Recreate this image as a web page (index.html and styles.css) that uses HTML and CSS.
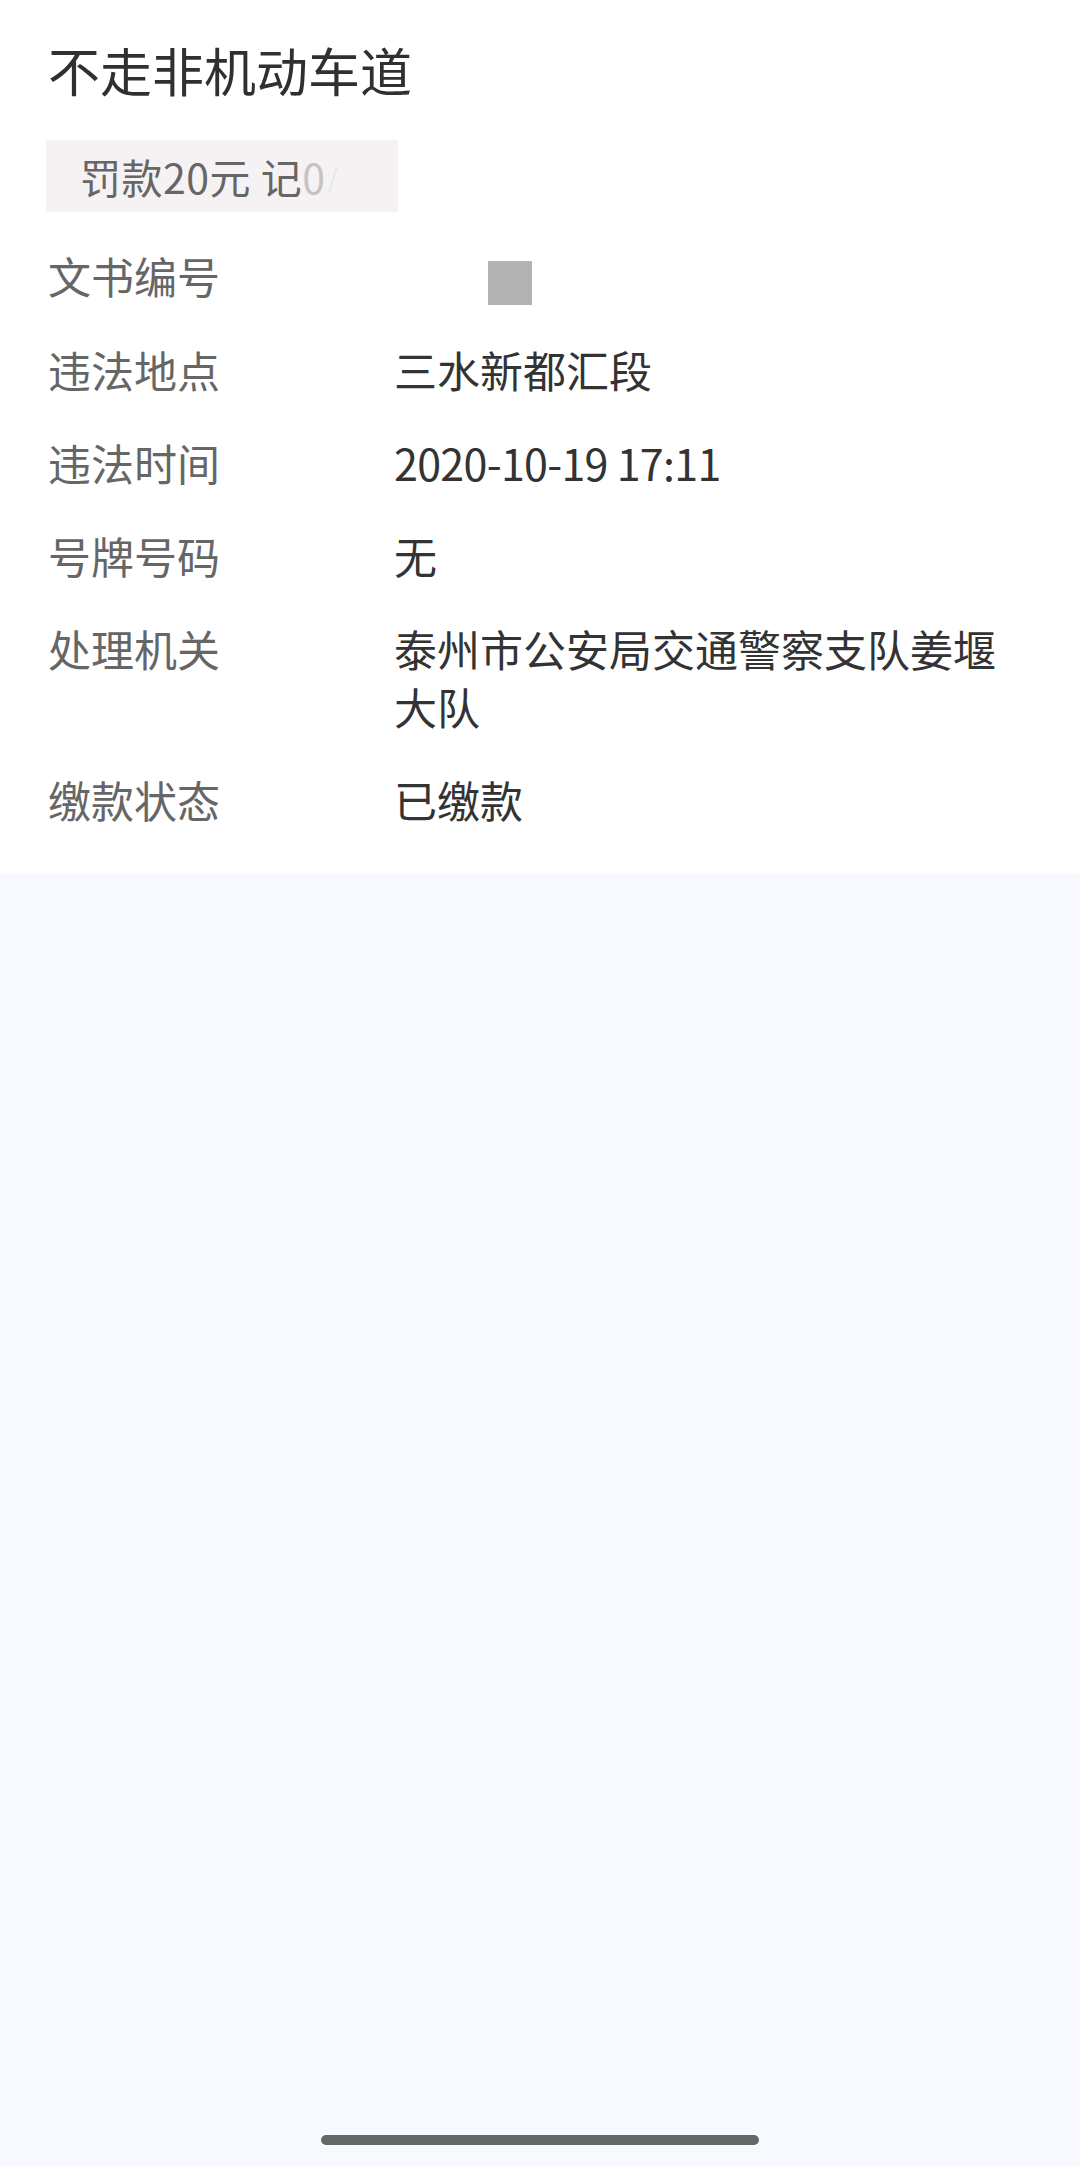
FILE: index.html
```html
<!DOCTYPE html>
<html lang="zh-CN">
<head>
    <meta charset="UTF-8">
    <meta name="viewport" content="width=device-width, initial-scale=1.0">
    <title>违法详情</title>
    <link rel="stylesheet" href="styles.css">
</head>
<body>
    <div class="detalhe">
        <h1 class="titulo">不走非机动车道</h1>

        <div class="tag">罚款20元 记<span class="tag-fade">0</span><span class="tag-risco">/</span></div>

        <div class="linhas">
            <div class="linha">
                <span class="rotulo">文书编号</span>
                <span class="valor"><span class="tarja"></span></span>
            </div>
            <div class="linha">
                <span class="rotulo">违法地点</span>
                <span class="valor">三水新都汇段</span>
            </div>
            <div class="linha">
                <span class="rotulo">违法时间</span>
                <span class="valor valor-num">2020-10-19 17:11</span>
            </div>
            <div class="linha">
                <span class="rotulo">号牌号码</span>
                <span class="valor">无</span>
            </div>
            <div class="linha">
                <span class="rotulo">处理机关</span>
                <span class="valor">泰州市公安局交通警察支队姜堰大队</span>
            </div>
            <div class="linha">
                <span class="rotulo">缴款状态</span>
                <span class="valor">已缴款</span>
            </div>
        </div>
    </div>

    <div class="rodape">
        <div class="home-bar"></div>
    </div>
</body>
</html>
```

FILE: styles.css
```css
body {
    margin: 0;
    padding: 0;
    background: #f7f9fe;
    font-family: "Noto Sans CJK SC", "Noto Sans", sans-serif;
    width: 1080px;
    height: 2166px;
    display: flex;
    flex-direction: column;
}

/* Bloco branco com os dados */
.detalhe {
    background: #fff;
    padding: 35px 48px 46px 48px;
}

.titulo {
    margin: 0;
    font-size: 52px;
    line-height: 70px;
    font-weight: 400;
    color: #303030;
}

.tag {
    display: inline-flex;
    align-items: center;
    margin-top: 35px;
    height: 72px;
    width: 352px;
    box-sizing: border-box;
    padding-left: 34px;
    margin-left: -2px;
    background: #f6f2f4;
    font-size: 41px;
    letter-spacing: 0.5px;
    color: #666;
    white-space: nowrap;
}

.tag-fade {
    color: #c4c4c4;
}

.tag-risco {
    color: #e6e6e6;
    font-size: 26px;
    margin-left: 2px;
}

.linhas {
    display: flex;
    flex-direction: column;
    gap: 35px;
    margin-top: 34px;
}

.linha {
    display: flex;
    font-size: 43px;
    line-height: 58px;
}

.rotulo {
    flex: 0 0 346px;
    color: #666;
}

.valor {
    flex: 1;
    color: #333;
    padding-right: 36px;
}

.valor-num {
    letter-spacing: -0.7px;
}

/* Quadrado cinza que cobre o número */
.tarja {
    display: inline-block;
    width: 44px;
    height: 44px;
    margin-left: 94px;
    margin-top: 15px;
    background: #b3b3b3;
    vertical-align: top;
}

.rodape {
    flex: 1;
    display: flex;
    justify-content: center;
    align-items: flex-end;
    padding-bottom: 21px;
}

.home-bar {
    width: 438px;
    height: 10px;
    border-radius: 5px;
    background: #636964;
}
```
